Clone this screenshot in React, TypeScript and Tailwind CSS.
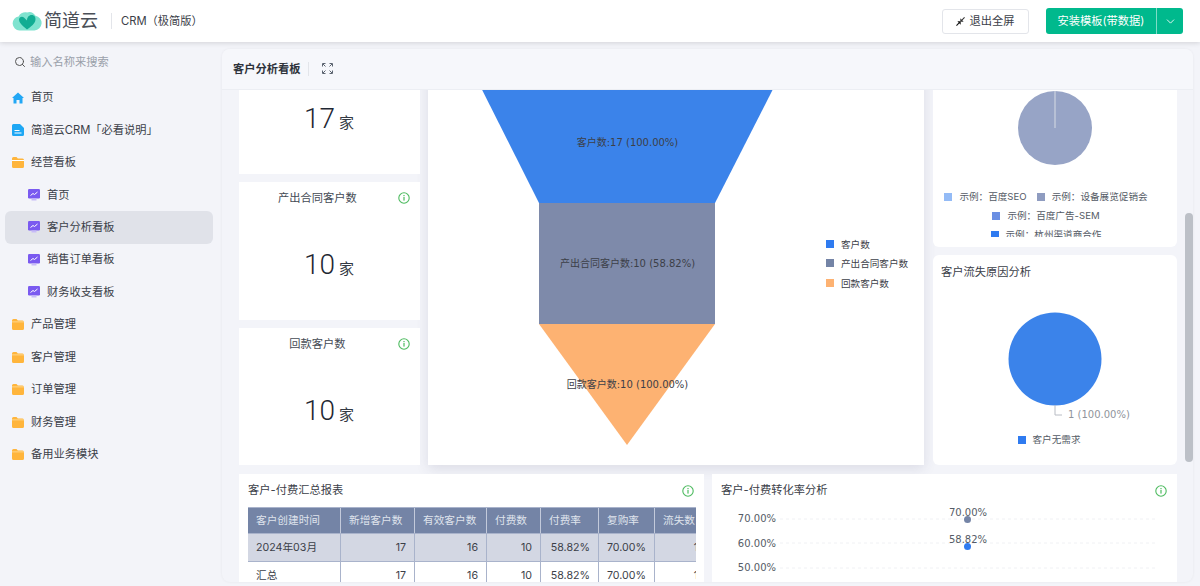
import { ChevronDown, Search } from 'lucide-react';

const cjk = "font-['Inter','Noto_Sans_CJK_SC',sans-serif]";

function Logo() {
  return (
    <svg width="30" height="20" viewBox="0 0 32 20">
      <path d="M8 20a7.5 7.5 0 0 1-1-14.9C9 1.5 13 0 16 1c3-1.5 7-.5 9 3.5a7.8 7.8 0 0 1-1 15.5Z" fill="#7fe3cf" />
      <path d="M16 19C11 15 7.5 12 7.5 8.500C7.500 5.500 11 4.500 13 6.500L16 9.500C16 6 18 3.500 21 3.500C24 3.500 25.500 6 25 9C24.400 13 20 16.500 16 19Z" fill="#11ad93" />
    </svg>
  );
}

function HomeIcon() {
  return (
    <svg width="12" height="12" viewBox="0 0 12 12">
      <path d="M6 0.500L12 6H10.500V11.500H7.500V8H4.500V11.500H1.500V6H0Z" fill="#22a7f5" />
    </svg>
  );
}

function DocIcon() {
  return (
    <svg width="12" height="12" viewBox="0 0 12 12">
      <path d="M1.500 0H8L12 4V10.500A1.500 1.500 0 0 1 10.500 12H1.500A1.500 1.500 0 0 1 0 10.500V1.500A1.500 1.500 0 0 1 1.500 0Z" fill="#1ea7f4" />
      <rect x="2.500" y="6" width="5" height="1" fill="#fff" />
      <rect x="2.500" y="8.500" width="7" height="1" fill="#fff" />
    </svg>
  );
}

function FolderIcon({ open }: { open?: boolean }) {
  return (
    <svg width="12" height="11" viewBox="0 0 12 11">
      <path d="M1.500 0H4.500L5.800 1.500H10.500A1.500 1.500 0 0 1 12 3V9.500A1.500 1.500 0 0 1 10.500 11H1.500A1.500 1.500 0 0 1 0 9.500V1.500A1.500 1.500 0 0 1 1.500 0Z" fill="#ffb53c" />
      {open ? <rect x="0" y="3" width="12" height="1" fill="#fff" /> : <rect x="0" y="2.500" width="12" height="0.800" fill="#ffdf9e" />}
    </svg>
  );
}

function BoardIcon() {
  return (
    <svg width="12" height="12" viewBox="0 0 12 12">
      <rect x="0" y="0" width="12" height="9.500" rx="1.200" fill="#7a5af0" />
      <rect x="3.500" y="9.500" width="5" height="2" fill="#c7bbf8" />
      <path d="M2.500 6.500L5 4.500L6.500 5.500L9.500 3" stroke="#fff" strokeWidth="1" fill="none" />
    </svg>
  );
}

function InfoIcon() {
  return (
    <svg width="12" height="12" viewBox="0 0 12 12" className="shrink-0">
      <circle cx="6" cy="6" r="5.200" fill="none" stroke="#4dbb5f" strokeWidth="1.100" />
      <rect x="5.400" y="5" width="1.200" height="3.600" fill="#4dbb5f" />
      <rect x="5.400" y="3" width="1.200" height="1.200" fill="#4dbb5f" />
    </svg>
  );
}

function ExpandIcon() {
  return (
    <svg width="11" height="11" viewBox="0 0 11 11" fill="none" stroke="#5c6470" strokeWidth="1">
      <path d="M0.500 3.500V0.500H3.500M7.500 0.500H10.500V3.500M10.500 7.500V10.500H7.500M3.500 10.500H0.500V7.500" />
      <path d="M1 1L3.500 3.500M10 1L7.500 3.500M10 10L7.500 7.500M1 10L3.500 7.500" />
    </svg>
  );
}

function ExitIcon() {
  return (
    <svg width="9" height="9" viewBox="0 0 10 10">
      <path d="M9.500 0.500L6 4" stroke="#333" strokeWidth="1.200" />
      <path d="M0.500 9.500L4 6" stroke="#111" strokeWidth="1.200" />
      <path d="M4.800 1.500V5.200H8.500Z" fill="#333" />
      <path d="M1.500 4.800H5.200V8.500Z" fill="#111" />
    </svg>
  );
}

const navItems = [
  { label: '首页', icon: <HomeIcon /> },
  { label: '简道云CRM「必看说明」', icon: <DocIcon /> },
  { label: '经营看板', icon: <FolderIcon open /> },
  { label: '首页', icon: <BoardIcon />, child: true },
  { label: '客户分析看板', icon: <BoardIcon />, child: true, active: true },
  { label: '销售订单看板', icon: <BoardIcon />, child: true },
  { label: '财务收支看板', icon: <BoardIcon />, child: true },
  { label: '产品管理', icon: <FolderIcon /> },
  { label: '客户管理', icon: <FolderIcon /> },
  { label: '订单管理', icon: <FolderIcon /> },
  { label: '财务管理', icon: <FolderIcon /> },
  { label: '备用业务模块', icon: <FolderIcon /> },
];

function Sidebar() {
  return (
    <aside className="w-[222px] shrink-0 pt-[10px]">
      <div className="flex items-center gap-[4px] h-[20px] pl-[14px] text-[11.25px] text-[#9aa0aa]">
        <Search size={12} color="#555" strokeWidth={2} />
        <span>输入名称来搜索</span>
      </div>
      <nav className="mt-[9.5px] pl-[5px] pr-[9px]">
        {navItems.map((item, i) => (
          <div
            key={i}
            className={`flex items-center h-[32.45px] gap-[7px] rounded-md text-[11.25px] text-[#3b4048] ${item.child ? 'pl-[23px] gap-[7px]' : 'pl-[7px]'} ${item.active ? 'bg-[#e0e2e9]' : ''}`}
          >
            <span className="w-[12px] flex justify-center">{item.icon}</span>
            <span>{item.label}</span>
          </div>
        ))}
      </nav>
    </aside>
  );
}

function StatCard({ title, value, tall }: { title?: string; value: string; tall?: boolean }) {
  return (
    <div className={`bg-white relative ${tall ? 'h-[137px]' : 'h-[138px]'}`}>
      {title ? (
        <div className="flex items-center h-[31px] pr-[10px]">
          <span className="flex-1 text-center pt-[2px] pr-[2px] text-[11.25px] text-[#444b55]">{title}</span>
          <InfoIcon />
        </div>
      ) : (
        <div className="h-[31px]" />
      )}
      <div className="flex items-end justify-center mt-[34px] pr-[1px] text-[#1f2733]">
        <span className="text-[28px] leading-[36px] font-['Roboto',sans-serif] font-light">{value}</span>
        <span className="ml-[4px] mb-[3px] text-[15px] leading-[22px] text-[#333a44]">家</span>
      </div>
    </div>
  );
}

function Funnel() {
  return (
    <svg viewBox="428 36 496 429" className="w-full h-full block">
      <polygon points="455,36 800,36 715,203 539,203" fill="#3b83ea" />
      <rect x="539" y="203" width="176" height="121" fill="#7e8aaa" />
      <polygon points="539,324 715,324 627,445" fill="#fdb272" />
      <g fontSize="10" fill="#3c4048" textAnchor="middle" fontFamily="'DejaVu Sans','Noto Sans CJK SC',sans-serif">
        <text x="627.500" y="146">客户数:17 (100.00%)</text>
        <text x="627.500" y="267">产出合同客户数:10 (58.82%)</text>
        <text x="627.500" y="388">回款客户数:10 (100.00%)</text>
      </g>
      <g fontSize="9.600" fill="#3c4048">
        <rect x="826" y="240" width="8" height="8" fill="#2f7bf0" />
        <text x="841" y="248">客户数</text>
        <rect x="826" y="259" width="8" height="8" fill="#7484a6" />
        <text x="841" y="267">产出合同客户数</text>
        <rect x="826" y="279" width="8" height="8" fill="#fdb272" />
        <text x="841" y="287">回款客户数</text>
      </g>
    </svg>
  );
}

function LegendItem({ color, label }: { color: string; label: string }) {
  return (
    <span className="inline-flex items-center gap-[7px] text-[9.6px] text-[#555b66]">
      <span className="w-[8px] h-[8px]" style={{ background: color }} />
      {label}
    </span>
  );
}

function SourceCard() {
  return (
    <div className="bg-white rounded-md h-[211px] pt-[55px] overflow-hidden">
      <svg width="74" height="74" viewBox="0 0 74 74" className="block mx-auto">
        <circle cx="37" cy="37" r="37" fill="#97a4c6" />
        <rect x="36.500" y="0" width="1" height="37" fill="#d8dbe4" />
      </svg>
      <div className="mt-[25px] h-[47px] pr-[18px] overflow-hidden flex flex-col items-center gap-y-[5px] leading-[14px]">
        <div className="flex gap-[10px] h-[14px]">
          <LegendItem color="#94bbf6" label="示例：百度SEO" />
          <LegendItem color="#8f9cc0" label="示例：设备展览促销会" />
        </div>
        <div className="h-[14px] flex">
          <LegendItem color="#6b8fe3" label="示例：百度广告-SEM" />
        </div>
        <div className="h-[14px] flex">
          <LegendItem color="#2f7bf0" label="示例：杭州渠道商合作" />
        </div>
      </div>
    </div>
  );
}

function LossCard() {
  return (
    <div className="bg-white rounded-md h-[210px]">
      <div className="pl-[8px] pt-[8px] text-[11.25px] leading-[18px] text-[#3b4048]">客户流失原因分析</div>
      <svg width="244" height="148" viewBox="933 281 244 148" className="block">
        <circle cx="1055" cy="359" r="46.500" fill="#3b83ea" />
        <path d="M1055 405V415H1062" stroke="#b8bcc4" fill="none" />
        <text x="1068" y="418" fontSize="10" fill="#8f949c" fontFamily="'DejaVu Sans',sans-serif">1 (100.00%)</text>
      </svg>
      <div className="flex justify-center mt-[4px] pr-[12px]">
        <LegendItem color="#2f7bf0" label="客户无需求" />
      </div>
    </div>
  );
}

const colWidths = ['w-[93px]', 'w-[74px]', 'w-[72px]', 'w-[54px]', 'w-[58px]', 'w-[56px]', 'w-[52px]'];
const headers = ['客户创建时间', '新增客户数', '有效客户数', '付费数', '付费率', '复购率', '流失数'];
const rows = [
  { bg: 'bg-[#d3d7e3]', cells: ['2024年03月', '17', '16', '10', '58.82%', '70.00%', '1'] },
  { bg: 'bg-white', cells: ['汇总', '17', '16', '10', '58.82%', '70.00%', '1'] },
];

function ReportCard() {
  return (
    <div className="bg-white w-[465px] h-[130px] pl-[9px] pr-[8px] overflow-hidden">
      <div className="flex items-center justify-between h-[33px] pr-[2px] text-[11.25px] text-[#3b4048]">
        <span>客户-付费汇总报表</span>
        <InfoIcon />
      </div>
      <div className="overflow-hidden w-[448px]">
        <div className="flex w-[459px] bg-[#7484a6] text-[#dfe3ec] text-[10.67px] h-[27px] border-y border-[#a9b3cb]">
          {headers.map((h, i) => (
            <div key={h} className={`${colWidths[i]} shrink-0 flex items-center pl-[8px] border-r border-[#c3cadb]`}>{h}</div>
          ))}
        </div>
        {rows.map((row, r) => (
          <div key={r} className={`flex w-[459px] ${row.bg} text-[#3b4048] text-[10.67px] h-[28px] border-b border-[#a9b3cb]`}>
            {row.cells.map((c, i) => (
              <div
                key={i}
                className={`${colWidths[i]} shrink-0 flex items-center border-r border-[#a9b3cb] ${i === 0 ? 'pl-[8px]' : 'justify-end pr-[8px]'}`}
              >
                {c}
              </div>
            ))}
          </div>
        ))}
      </div>
    </div>
  );
}

function RateCard() {
  return (
    <div className="bg-white w-[465px] h-[130px] pl-[9px] pr-[10px] overflow-hidden">
      <div className="flex items-center justify-between h-[33px] text-[11.25px] text-[#3b4048]">
        <span>客户-付费转化率分析</span>
        <InfoIcon />
      </div>
      <svg width="465" height="97" viewBox="712 507 465 97" className="block -ml-[9px]">
        <g stroke="#f0f1f4" strokeDasharray="3 3">
          <line x1="780" y1="519" x2="1155" y2="519" />
          <line x1="780" y1="543" x2="1155" y2="543" />
          <line x1="780" y1="568" x2="1155" y2="568" />
        </g>
        <g fontSize="10" fill="#555b66" fontFamily="'DejaVu Sans',sans-serif">
          <text x="776" y="522" textAnchor="end">70.00%</text>
          <text x="776" y="547" textAnchor="end">60.00%</text>
          <text x="776" y="571" textAnchor="end">50.00%</text>
          <text x="968" y="516" textAnchor="middle">70.00%</text>
          <text x="968" y="543" textAnchor="middle">58.82%</text>
        </g>
        <circle cx="967.500" cy="519.500" r="3.500" fill="#7484a6" />
        <circle cx="967.500" cy="546.500" r="3.500" fill="#2f7bf0" />
      </svg>
    </div>
  );
}

export default function App() {
  return (
    <div className={`${cjk} w-[1200px] h-[586px] overflow-hidden bg-[#f3f4f9] flex flex-col`}>
      <header className="relative z-10 h-[42px] shrink-0 bg-white shadow-[0_1px_5px_rgba(0,0,0,0.14)] flex items-center pl-[12px] pr-[17px]">
        <Logo />
        <span className="ml-[2px] text-[18px] leading-[24px] text-[#4a4f57]">简道云</span>
        <span className="w-px h-[16px] bg-[#e3e5ea] ml-[13px]" />
        <span className="ml-[9px] text-[11.25px] text-[#3b4048]">CRM（极简版）</span>
        <div className="ml-auto flex items-center gap-[17px]">
          <button className="flex items-center justify-center gap-[4px] w-[87px] h-[25px] border border-[#e3e5ea] rounded-[3px] bg-white text-[11.25px] text-[#3b4048]">
            <ExitIcon />
            退出全屏
          </button>
          <div className="flex h-[26px] rounded-[3px] overflow-hidden bg-[#00b98d] text-white text-[11.25px]">
            <span className="w-[111px] flex items-center justify-center border-r border-[#7fdcc6]">安装模板(带数据)</span>
            <span className="w-[26px] flex items-center justify-center">
              <ChevronDown size={13} strokeWidth={1.6} />
            </span>
          </div>
        </div>
      </header>
      <div className="flex flex-1 min-h-0">
        <Sidebar />
        <main className="relative w-[971px] h-[533px] mt-[7px] bg-[#f3f4f9] rounded-lg shadow-[0_0_3px_rgba(0,0,0,0.06)] overflow-hidden flex flex-col">
          <div className="h-[41px] shrink-0 bg-[#f6f7fb] border-b border-[#eceef3] flex items-center pl-[11px]">
            <span className="text-[11.25px] font-bold text-[#2e333b]">客户分析看板</span>
            <span className="w-px h-[14px] bg-[#e3e5ea] ml-[7px]" />
            <span className="ml-[13px] flex -mt-[1px]"><ExpandIcon /></span>
          </div>
          <div className="flex-1 min-h-0 overflow-hidden pl-[17px]">
            <div className="-mt-[54px] flex flex-col gap-[9px]">
              <div className="flex">
                <div className="w-[181px] flex flex-col gap-[8px]">
                  <StatCard value="17" />
                  <StatCard title="产出合同客户数" value="10" />
                  <StatCard title="回款客户数" value="10" tall />
                </div>
                <div className="ml-[8px] w-[496px] h-[429px] bg-white shadow-[0_4px_12px_rgba(60,60,100,0.12)]">
                  <Funnel />
                </div>
                <div className="ml-[9px] w-[244px] flex flex-col gap-[8px]">
                  <SourceCard />
                  <LossCard />
                </div>
              </div>
              <div className="flex gap-[8px]">
                <ReportCard />
                <RateCard />
              </div>
            </div>
          </div>
          <div className="absolute right-0 top-[164px] w-[8px] h-[249px] rounded bg-[#bcc0c7]" />
        </main>
      </div>
    </div>
  );
}
